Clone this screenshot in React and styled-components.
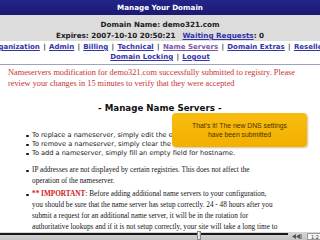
import React from "react";
import styled, { createGlobalStyle } from "styled-components";

const Global = createGlobalStyle`
  html, body { margin: 0; padding: 0; background: #ffffff; }
  body { font-family: "DejaVu Sans", Verdana, sans-serif; }
`;

const Frame = styled.div`
  width: 320px;
  height: 240px;
  display: flex;
  flex-direction: column;
  overflow: hidden;
  background: #ffffff;
`;

const Screen = styled.div`
  position: relative;
  flex: 1;
  overflow: hidden;
`;

const TitleBar = styled.div`
  height: 15px;
  background: linear-gradient(#24248a, #1a1a70);
  color: #ffffff;
  font: bold 7.2px/15px "DejaVu Sans", Verdana, sans-serif;
  text-align: center;
`;

const InfoBand = styled.div`
  height: 26px;
  box-sizing: border-box;
  padding-top: 4px;
  background: #dcdcdc;
  font: bold 7.2px/11px "DejaVu Sans", Verdana, sans-serif;
  color: #202020;
  text-align: center;
  white-space: nowrap;
`;

const InfoLine = styled.div`
  display: flex;
  justify-content: center;
  gap: ${(p) => p.$gap || 0}px;
`;

const Link = styled.span`
  color: ${(p) => (p.$current ? "#7a58a8" : "#3434a8")};
  text-decoration: underline;
`;

const NavBlock = styled.div`
  padding: 1px 0 2px;
  border-bottom: 1px solid #9aa4c0;
  font: bold 7px/10px "DejaVu Sans", Verdana, sans-serif;
  color: #404040;
  white-space: nowrap;
`;

const NavRow = styled.div`
  display: flex;
  justify-content: ${(p) => (p.$start ? "flex-start" : "center")};
  margin-left: ${(p) => p.$shift || 0}px;
  gap: 3.3px;
`;

const Notice = styled.div`
  padding: 1.5px 0 0 8px;
  color: #c83232;
  font: 8.3px/11px "Liberation Serif", "Times New Roman", serif;
  white-space: nowrap;
`;

const SectionTitle = styled.div`
  margin-top: 13px;
  padding-left: 98px;
  font: bold 8.7px/12px "DejaVu Sans", Verdana, sans-serif;
  color: #111111;
  white-space: nowrap;
`;

const List = styled.ul`
  list-style: none;
  margin: ${(p) => p.$top}px 0 0;
  padding: 0 0 0 32px;
  color: #151515;
  white-space: nowrap;
  font: ${(p) =>
    p.$serif
      ? `7.25px/11px "Liberation Serif", "Times New Roman", serif`
      : `6.6px/9px "DejaVu Sans", Verdana, sans-serif`};
`;

const Item = styled.li`
  position: relative;
  margin-top: ${(p) => p.$gap || 0}px;
  &::before {
    content: "";
    position: absolute;
    left: -6px;
    top: ${(p) => (p.$serif ? 4.5 : 3.5)}px;
    width: 2.5px;
    height: 2.5px;
    border-radius: 50%;
    background: #111111;
  }
`;

const Important = styled.b`
  color: #d02020;
`;

const Tooltip = styled.div`
  position: absolute;
  left: 172px;
  top: 113px;
  width: 135px;
  height: 34px;
  box-sizing: border-box;
  padding-top: 8px;
  border-radius: 4px;
  background: linear-gradient(#f8bc10, #f2b000);
  box-shadow: 1px 1px 2px rgba(120, 80, 0, 0.35);
  color: #4a3000;
  font: 6.8px/9px "Liberation Sans", Arial, sans-serif;
  text-align: center;
`;

const ControlBar = styled.div`
  height: 8px;
  display: flex;
  align-items: stretch;
  background: linear-gradient(#d8d8d8, #c4c4c4);
`;

const Track = styled.div`
  position: relative;
  flex: 0 0 288px;
  &::before {
    content: "";
    position: absolute;
    left: 0;
    right: 0;
    top: 1px;
    height: 2px;
    background: #1a1a1a;
  }
`;

const Thumb = styled.div`
  position: absolute;
  top: -1px;
  width: 4px;
  height: 9px;
  box-sizing: border-box;
  border: 1px solid #8a8a8a;
  background: linear-gradient(90deg, #f4f4f4, #cfcfcf);
`;

const Rewind = styled.div`
  flex: 0 0 18px;
  display: flex;
  align-items: center;
  justify-content: center;
`;

const TimeBox = styled.div`
  flex: 1;
  margin: 1px 0 0 1px;
  border: 1px solid #9a9a9a;
  border-right: none;
  background: #f6f6f6;
  font: 5px/6px "DejaVu Sans", sans-serif;
  color: #333;
  padding-left: 3px;
  overflow: hidden;
  white-space: nowrap;
`;

const Sep = () => <span>|</span>;

export default function App() {
  const progress = 199 / 288;
  return (
    <Frame>
      <Global />
      <Screen>
        <TitleBar>Manage Your Domain</TitleBar>
        <InfoBand>
          <InfoLine>Domain Name: demo321.com</InfoLine>
          <InfoLine $gap={7}>
            <span>Expires: 2007-10-10 20:50:21</span>
            <span>
              <Link>Waiting Requests</Link>: 0
            </span>
          </InfoLine>
        </InfoBand>
        <NavBlock>
          <NavRow $start $shift={-11}>
            <Link>Organization</Link>
            <Sep />
            <Link>Admin</Link>
            <Sep />
            <Link>Billing</Link>
            <Sep />
            <Link>Technical</Link>
            <Sep />
            <Link $current>Name Servers</Link>
            <Sep />
            <Link>Domain Extras</Link>
            <Sep />
            <Link>Reseller</Link>
          </NavRow>
          <NavRow>
            <Link>Domain Locking</Link>
            <Sep />
            <Link>Logout</Link>
          </NavRow>
        </NavBlock>
        <Notice>
          Nameservers modification for demo321.com successfully submitted to registry. Please
          <br />
          review your changes in 15 minutes to verify that they were accepted
        </Notice>
        <SectionTitle>- Manage Name Servers -</SectionTitle>
        <List $top={17.5}>
          <Item>To replace a nameserver, simply edit the existing hostname.</Item>
          <Item>To remove a nameserver, simply clear the hostname.</Item>
          <Item>To add a nameserver, simply fill an empty field for hostname.</Item>
        </List>
        <List $serif $top={7}>
          <Item $serif>
            IP addresses are not displayed by certain registries. This does not affect the
            <br />
            operation of the nameserver.
          </Item>
          <Item $serif $gap={2}>
            <Important>** IMPORTANT</Important>: Before adding additional name servers to your configuration,
            <br />
            you should be sure that the name server has setup correctly. 24 - 48 hours after you
            <br />
            submit a request for an additional name server, it will be in the rotation for
            <br />
            authoritative lookups and if it is not setup correctly, your site will take a long time to
          </Item>
        </List>
        <Tooltip>
          That's it! The new DNS settings
          <br />
          have been submitted
        </Tooltip>
      </Screen>
      <ControlBar>
        <Track>
          <Thumb style={{ left: `${progress * 288 - 2}px` }} />
        </Track>
        <Rewind>
          <svg width="10" height="5" viewBox="0 0 10 5">
            <path d="M0 2.5 L4 0 V5 Z M4 2.5 L8 0 V5 Z" fill="#555" />
            <rect x="8.5" y="0" width="1" height="5" fill="#555" />
          </svg>
        </Rewind>
        <TimeBox>1:2</TimeBox>
      </ControlBar>
    </Frame>
  );
}
